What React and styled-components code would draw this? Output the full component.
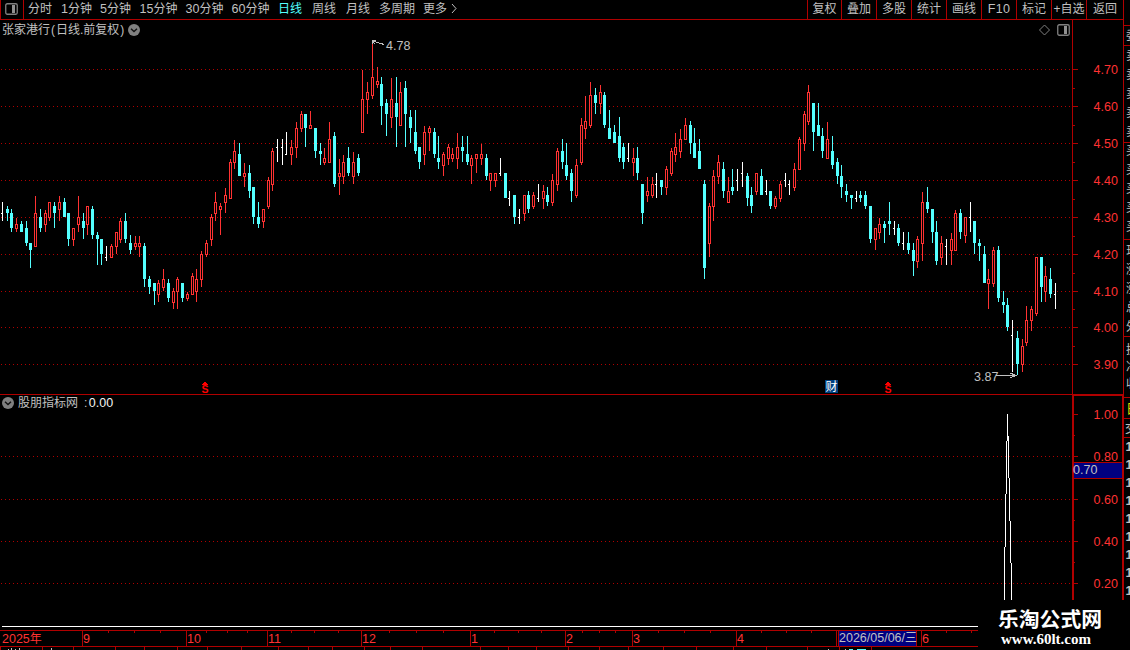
import React from 'react';
import styled, { createGlobalStyle, css } from 'styled-components';

const GlobalStyle = createGlobalStyle`
    body {
        margin: 0;
        background-color: #000;
    }
`;

const line = '#b00000';
const up = '#ff3232';
const down = '#54ffff';
const grey = '#c0c0c0';

const textStyles = css`
    font-family: "Liberation Sans", "Noto Sans CJK SC", sans-serif;
    font-size: 12px;
    line-height: 18px;
    white-space: nowrap;
`;

const Screen = styled.div`
    display: grid;
    grid-template-columns: 1123px 7px;
    width: 1130px;
    height: 650px;
    overflow: hidden;
    background-color: #000;
    color: ${grey};
    position: relative;
    ${textStyles}
`;
const Main = styled.div`
    display: grid;
    grid-template-rows: 20px 375px 235px 20px;
    min-width: 0;
`;
const Toolbar = styled.div`
    display: flex;
    box-sizing: border-box;
    border-bottom: 1px solid ${line};
    height: 20px;
    line-height: 19px;
`;
const IconCell = styled.div`
    box-sizing: border-box;
    width: 24px;
    height: 19px;
    border-left: 1px solid ${line};
    border-right: 1px solid ${line};
    padding: 3px 0 0 4px;
    margin-right: 4px;

    svg {
        display: block;
    }
`;
const Period = styled.div`
    width: ${props => props.$w}px;
    color: ${props => (props.$active ? down : grey)};

    b {
        font-weight: normal;
        font-size: 12.5px;
    }
`;
const Spacer = styled.div`
    flex: 1;
`;
const Tool = styled.div`
    box-sizing: border-box;
    width: ${props => props.$w}px;
    border-left: 1px solid ${line};
    text-align: center;
    font-size: ${props => (props.$latin ? '12.5px' : '12px')};
    letter-spacing: ${props => (props.$latin ? '0.4px' : '0')};
`;
const Pane = styled.div`
    position: relative;
    overflow: hidden;

    > svg {
        display: block;
    }
`;
const PaneTitle = styled.div`
    position: absolute;
    left: ${props => props.$x}px;
    top: ${props => props.$y}px;
    display: flex;
    align-items: center;
    height: 18px;

    i {
        font-style: normal;
        width: 6px;
        text-align: center;
    }
    b {
        font-weight: normal;
        font-size: 12.5px;
        color: #f4f4f4;
        margin-left: 1.5px;
    }
    svg {
        margin: 0 4px 1px 3px;
    }
`;
const PaneIcons = styled.div`
    position: absolute;
    left: 1038px;
    top: 3.5px;
    display: flex;
    gap: 6px;
`;
const Side = styled.div`
    overflow: hidden;

    svg {
        display: block;
    }
`;
const Watermark = styled.div`
    position: absolute;
    left: 978px;
    top: 600px;
    width: 152px;
    height: 50px;
    background-color: #000;
    color: #fff;

    strong {
        display: block;
        margin: 5px 0 0 20px;
        font-family: "Noto Sans CJK SC", sans-serif;
        font-size: 20.8px;
        line-height: 27px;
    }
    span {
        display: block;
        margin-left: 23px;
        font-family: "Liberation Serif", serif;
        font-weight: bold;
        font-size: 15px;
        line-height: 14px;
    }
`;

// [kind, x, high, body top, body bottom, low]; a 'w' bar has one body value
const candles = [
    ['w', 2, 202, 213, 213, 221], ['d', 7, 206, 209, 213, 221], ['d', 11, 209, 213, 228, 232], ['u', 16, 218, 224, 229, 232],
    ['d', 21, 221, 224, 232, 232], ['d', 26, 221, 228, 243, 246], ['d', 30, 243, 243, 250, 268], ['u', 35, 196, 213, 247, 247],
    ['d', 40, 209, 217, 228, 232], ['u', 45, 210, 213, 225, 232], ['u', 49, 202, 202, 218, 221], ['d', 54, 202, 206, 213, 228],
    ['u', 59, 196, 202, 210, 221], ['d', 64, 198, 202, 217, 217], ['d', 68, 213, 213, 239, 246], ['u', 73, 228, 228, 240, 246],
    ['u', 78, 196, 217, 225, 232], ['d', 83, 213, 221, 228, 239], ['u', 87, 206, 206, 225, 235], ['d', 92, 206, 209, 235, 239],
    ['d', 97, 232, 235, 239, 265], ['d', 101, 239, 239, 254, 265], ['w', 106, 246, 257, 257, 261], ['u', 111, 244, 246, 258, 258],
    ['u', 116, 232, 232, 247, 254], ['u', 120, 218, 221, 240, 243], ['d', 125, 213, 221, 239, 243], ['d', 130, 235, 243, 250, 254],
    ['u', 135, 236, 243, 247, 250], ['u', 139, 236, 243, 247, 257], ['d', 144, 243, 246, 279, 287], ['d', 149, 276, 279, 287, 294],
    ['d', 154, 283, 283, 291, 305], ['u', 158, 280, 283, 295, 302], ['u', 163, 269, 279, 288, 291], ['d', 168, 279, 283, 298, 302],
    ['u', 173, 288, 291, 303, 309], ['u', 177, 277, 279, 292, 309], ['d', 182, 283, 283, 298, 302], ['u', 187, 292, 294, 299, 301],
    ['u', 192, 273, 276, 295, 295], ['u', 196, 269, 279, 292, 302], ['u', 201, 251, 254, 280, 287], ['u', 206, 240, 243, 255, 257],
    ['u', 211, 214, 217, 240, 246], ['u', 215, 192, 202, 214, 221], ['u', 220, 203, 206, 210, 235], ['u', 225, 188, 195, 203, 213],
    ['u', 230, 159, 162, 199, 199], ['u', 234, 140, 151, 163, 169], ['d', 239, 143, 154, 176, 176], ['u', 244, 163, 173, 177, 187],
    ['d', 249, 165, 173, 191, 198], ['d', 253, 187, 187, 217, 224], ['d', 258, 202, 217, 224, 228], ['u', 263, 209, 209, 222, 228],
    ['u', 268, 177, 180, 207, 209], ['u', 272, 148, 151, 185, 191], ['w', 277, 139, 147, 147, 162], ['w', 282, 139, 147, 147, 165],
    ['w', 286, 132, 154, 154, 155], ['u', 291, 140, 147, 155, 165], ['u', 296, 122, 128, 148, 158], ['u', 301, 111, 114, 129, 132],
    ['d', 305, 114, 114, 128, 147], ['u', 310, 111, 125, 129, 129], ['d', 315, 128, 128, 151, 158], ['d', 320, 143, 151, 154, 165],
    ['u', 324, 148, 158, 163, 165], ['u', 329, 122, 139, 163, 163], ['d', 334, 132, 136, 184, 187], ['u', 339, 159, 173, 177, 195],
    ['u', 343, 155, 162, 177, 184], ['d', 348, 147, 158, 173, 176], ['u', 353, 152, 162, 177, 184], ['d', 358, 154, 158, 173, 176],
    ['u', 362, 70, 99, 133, 133], ['u', 367, 82, 92, 100, 114], ['u', 372, 43, 77, 96, 99], ['u', 377, 67, 81, 85, 88],
    ['d', 381, 77, 84, 106, 125], ['d', 386, 99, 103, 114, 136], ['u', 391, 78, 99, 118, 128], ['d', 396, 77, 103, 117, 147],
    ['u', 400, 82, 92, 126, 126], ['d', 405, 81, 88, 114, 147], ['d', 410, 110, 117, 128, 143], ['d', 415, 110, 132, 151, 154],
    ['d', 419, 147, 147, 162, 169], ['u', 424, 126, 132, 155, 165], ['u', 429, 126, 128, 133, 151], ['d', 434, 128, 132, 154, 158],
    ['d', 438, 136, 158, 162, 169], ['u', 443, 152, 154, 166, 176], ['u', 448, 144, 147, 159, 165], ['u', 452, 148, 154, 159, 162],
    ['u', 457, 133, 147, 159, 169], ['d', 462, 136, 147, 151, 162], ['d', 467, 136, 154, 162, 165], ['u', 471, 155, 158, 166, 184],
    ['u', 476, 154, 154, 159, 173], ['u', 481, 144, 154, 159, 165], ['d', 486, 154, 158, 176, 180], ['u', 490, 173, 173, 181, 191],
    ['u', 495, 173, 173, 181, 187], ['w', 500, 158, 173, 173, 176], ['d', 505, 173, 173, 198, 198], ['w', 509, 191, 198, 198, 206],
    ['d', 514, 195, 195, 217, 224], ['w', 519, 209, 217, 217, 224], ['u', 524, 195, 195, 214, 221], ['d', 528, 191, 195, 209, 213],
    ['u', 533, 192, 195, 207, 209], ['w', 538, 184, 198, 198, 202], ['u', 543, 185, 191, 199, 209], ['d', 547, 187, 195, 202, 206],
    ['u', 552, 174, 180, 203, 206], ['u', 557, 148, 151, 185, 191], ['d', 562, 139, 151, 162, 169], ['d', 566, 143, 165, 176, 180],
    ['d', 571, 169, 173, 191, 202], ['u', 576, 159, 165, 196, 198], ['u', 581, 118, 125, 163, 165], ['u', 585, 96, 121, 129, 139],
    ['u', 590, 82, 95, 126, 128], ['d', 595, 88, 95, 103, 114], ['u', 600, 85, 92, 104, 114], ['d', 604, 92, 95, 125, 128],
    ['d', 609, 110, 128, 139, 139], ['d', 614, 125, 132, 143, 143], ['d', 619, 117, 136, 158, 162], ['d', 623, 143, 147, 162, 169],
    ['w', 628, 143, 158, 158, 162], ['u', 633, 148, 158, 163, 176], ['d', 637, 147, 158, 173, 180], ['d', 642, 184, 184, 213, 224],
    ['u', 647, 177, 191, 196, 202], ['u', 652, 177, 184, 196, 198], ['w', 656, 173, 184, 184, 198], ['d', 661, 180, 180, 187, 195],
    ['u', 666, 166, 169, 188, 195], ['u', 671, 148, 151, 174, 176], ['u', 675, 133, 147, 155, 162], ['u', 680, 129, 139, 152, 158],
    ['u', 685, 118, 125, 140, 140], ['d', 690, 121, 125, 143, 154], ['d', 694, 128, 143, 158, 158], ['d', 699, 139, 151, 169, 169],
    ['d', 704, 180, 184, 268, 279], ['u', 709, 203, 206, 244, 257], ['u', 713, 170, 176, 207, 221], ['u', 718, 155, 162, 177, 184],
    ['d', 723, 162, 169, 191, 198], ['u', 728, 177, 191, 203, 203], ['d', 732, 169, 187, 191, 195], ['w', 737, 169, 180, 180, 191],
    ['w', 742, 162, 173, 173, 187], ['d', 747, 173, 176, 198, 206], ['d', 751, 187, 195, 206, 213], ['u', 756, 173, 173, 192, 195],
    ['d', 761, 169, 176, 195, 195], ['w', 766, 180, 191, 191, 195], ['d', 770, 191, 191, 206, 209], ['u', 775, 196, 198, 207, 209],
    ['u', 780, 181, 184, 199, 202], ['w', 785, 173, 180, 180, 187], ['w', 789, 180, 184, 184, 195], ['u', 794, 163, 169, 188, 191],
    ['u', 799, 137, 139, 170, 170], ['u', 804, 111, 114, 144, 151], ['u', 808, 85, 92, 122, 125], ['d', 813, 103, 103, 132, 151],
    ['d', 818, 103, 125, 136, 136], ['d', 822, 128, 136, 151, 158], ['u', 827, 122, 139, 159, 159], ['d', 832, 136, 151, 165, 169],
    ['d', 837, 158, 162, 176, 184], ['d', 841, 165, 176, 187, 198], ['d', 846, 184, 191, 195, 202], ['d', 851, 195, 195, 198, 209],
    ['w', 856, 191, 198, 198, 202], ['d', 860, 191, 195, 198, 202], ['d', 865, 191, 195, 206, 209], ['d', 870, 206, 206, 239, 243],
    ['u', 875, 228, 228, 240, 250], ['u', 879, 218, 224, 233, 239], ['d', 884, 221, 224, 228, 243], ['d', 889, 202, 221, 224, 235],
    ['w', 894, 221, 228, 228, 235], ['d', 898, 224, 228, 243, 246], ['w', 903, 232, 243, 243, 250], ['d', 908, 232, 243, 250, 254],
    ['d', 913, 243, 250, 261, 276], ['u', 917, 236, 239, 262, 268], ['u', 922, 192, 202, 244, 261], ['d', 927, 187, 202, 209, 213],
    ['d', 932, 209, 209, 232, 243], ['d', 936, 221, 232, 261, 265], ['u', 941, 236, 243, 258, 265], ['w', 946, 239, 246, 246, 265],
    ['u', 951, 233, 239, 251, 265], ['u', 955, 210, 213, 251, 251], ['d', 960, 209, 213, 232, 239], ['u', 965, 217, 217, 236, 243],
    ['w', 970, 202, 217, 217, 232], ['d', 974, 221, 221, 243, 254], ['d', 979, 239, 243, 246, 261], ['d', 984, 246, 254, 283, 283],
    ['u', 988, 269, 279, 284, 309], ['u', 993, 247, 250, 284, 287], ['d', 998, 246, 250, 298, 302], ['d', 1003, 291, 302, 305, 313],
    ['d', 1007, 298, 305, 327, 331], ['w', 1012, 320, 335, 335, 372], ['d', 1017, 331, 338, 364, 375], ['u', 1022, 339, 346, 365, 372],
    ['u', 1026, 306, 320, 343, 346], ['u', 1031, 306, 309, 321, 331], ['u', 1036, 257, 257, 314, 316], ['d', 1041, 257, 257, 287, 302],
    ['u', 1045, 266, 276, 292, 302], ['d', 1050, 268, 279, 294, 298], ['w', 1055, 283, 294, 294, 309],
];

const prices = [['4.70', 69], ['4.60', 106], ['4.50', 143], ['4.40', 180], ['4.30', 217], ['4.20', 254], ['4.10', 291], ['4.00', 327], ['3.90', 364]];
const priceMinor = [88, 125, 162, 199, 236, 273, 309, 346];
const levels = [['1.00', 414], ['0.80', 456], ['0.60', 499], ['0.40', 541], ['0.20', 583]];
const levelMinor = [435, 520, 562];
const months = [['9', 82], ['10', 186], ['11', 267], ['12', 361], ['1', 470], ['2', 565], ['3', 632], ['4', 736], ['6', 921]];
const weekTicks = [108, 134, 160, 206, 227, 247, 291, 314, 338, 389, 416, 443, 494, 518, 541, 582, 599, 615, 658, 684, 710, 761, 786, 811, 946, 971];
const footTicks = [0, 42, 73, 115, 144, 177, 207, 241, 278, 308, 332, 364, 390, 422, 480, 508, 536, 568, 599, 628, 663, 696, 733, 766, 807, 839, 871];

const periods = [
    ['', '分时', 33], ['1', '分钟', 39], ['5', '分钟', 39.5], ['15', '分钟', 46], ['30', '分钟', 46], ['60', '分钟', 46.5],
    ['', '日线', 34], ['', '周线', 34], ['', '月线', 33], ['', '多周期', 44], ['', '更多', 27],
];
const tools = [['复权', 34], ['叠加', 35], ['多股', 35], ['统计', 35], ['画线', 35], ['F10', 35], ['标记', 35], ['+自选', 35], ['返回', 37]];

function Candle({ data }) {
    const [kind, x, high, top, bottom, low] = data;
    if (kind === 'w') {
        return <path fill="#fff" d={`M${x} ${high}h1V${low}h-1zM${x - 1} ${top}h1v1h-1z`} />;
    }
    if (kind === 'd') {
        return <path fill={down} d={`M${x} ${high}h1V${low}h-1zM${x - 1} ${top}h3V${bottom}h-3z`} />;
    }
    return (
        <g>
            <path fill={up} d={`M${x} ${high}h1V${top}h-1zM${x} ${bottom}h1V${low}h-1z`} />
            <rect x={x - 0.5} y={top + 0.5} width="2" height={bottom - top - 1} fill="none" stroke={up} />
        </g>
    );
}

function GridLine({ y }) {
    return <path d={`M1 ${y + 0.5}H1072`} stroke={line} strokeDasharray="1 3" />;
}

function AxisText({ x, y, fill, children }) {
    return (
        <text x={x} y={y} fill={fill || up} fontSize="12.5">{children}</text>
    );
}

function PanelIcon() {
    return (
        <svg width="13" height="12" viewBox="0 0 13 12">
            <rect x="0.75" y="0.75" width="11.5" height="10.5" rx="1.5" fill="none" stroke="#808080" strokeWidth="1.3" />
            <rect x="7" y="2" width="3" height="8" fill="#909090" />
        </svg>
    );
}

function Chevron() {
    return (
        <svg width="12" height="12" viewBox="0 0 12 12">
            <circle cx="6" cy="6" r="6" fill="#808080" />
            <path d="M3 4.8L6 7.6L9 4.8" fill="none" stroke="#111" strokeWidth="1.4" />
        </svg>
    );
}

function Dividend({ x }) {
    return (
        <g fill="#ff0000">
            <path d={`M${x + 2} 382h2v1h1v1h1v1h-6v-1h1v-1h1z`} />
            <text x={x - 0.5} y="393" fontSize="10.5" fontWeight="bold">S</text>
        </g>
    );
}

function PriceChart() {
    return (
        <svg width="1123" height="375" viewBox="0 20 1123 375" shapeRendering="crispEdges">
            {prices.map(([label, y]) => (
                <g key={label}>
                    <GridLine y={y} />
                    <rect x="1073" y={y} width="5" height="1" fill={line} />
                    <AxisText x="1093.5" y={y + 5}>{label}</AxisText>
                </g>
            ))}
            {priceMinor.map(y => <rect key={y} x="1073" y={y} width="2" height="1" fill={line} />)}
            <rect x="1072" y="20" width="1" height="375" fill={line} />
            {candles.map(c => <Candle key={c[1]} data={c} />)}
            <path d="M372.5 44V40.5H376M373 41L384 44.5M372.5 41L375 44" fill="none" stroke={grey} />
            <AxisText x="386" y="50" fill={grey}>4.78</AxisText>
            <AxisText x="974" y="381" fill={grey}>3.87</AxisText>
            <path d="M996 375.5H1016M1010 373L1016 375.5L1010 378" fill="none" stroke={grey} />
            <Dividend x={202} />
            <Dividend x={885} />
            <rect x="825" y="380" width="13" height="13" fill="#004080" />
            <text x="825.5" y="391" fontSize="12" fill="#fff">财</text>
            <rect x="0" y="394" width="1123" height="1" fill={line} />
        </svg>
    );
}

function IndicatorChart() {
    return (
        <svg width="1123" height="235" viewBox="0 395 1123 235" shapeRendering="crispEdges">
            {levels.map(([label, y], i) => (
                <g key={label}>
                    {i > 0 && <GridLine y={y} />}
                    <rect x="1074" y={y} width="4" height="1" fill={line} />
                    <AxisText x="1093.5" y={y + 5}>{label}</AxisText>
                </g>
            ))}
            {levelMinor.map(y => <rect key={y} x="1074" y={y} width="1" height="1" fill={line} />)}
            <path fill="#fff" d="M1007 414h1v27h-1zM1006 441h1v53h-1zM1005 494h1v53h-1zM1004 547h1v60h-1zM1008 436h1v42h-1zM1009 478h1v43h-1zM1010 521h1v42h-1zM1011 563h1v40h-1z" />
            <rect x="1074" y="462" width="48" height="17" fill={line} />
            <rect x="1074" y="463" width="48" height="15" fill="#000080" />
            <path fill={line} d="M1072 395h51v1h-49v234h-2zM1122 395h1v235h-1z" />
            <AxisText x="1073" y="474" fill={grey}>0.70</AxisText>
            <rect x="2" y="626" width="1070" height="1" fill="#fff" />
        </svg>
    );
}

function Timeline() {
    return (
        <svg width="1123" height="20" viewBox="0 630 1123 20" shapeRendering="crispEdges">
            <path fill={line} d="M0 630h1123v1h-1123zM0 646h1123v1h-1123zM836 631h1v15h-1z" />
            <AxisText x="2" y="643">2025<tspan fontSize="12">年</tspan></AxisText>
            {months.map(([label, x]) => (
                <g key={label}>
                    <rect x={x} y="631" width="1" height="15" fill={line} />
                    <AxisText x={x + 1} y="643">{label}</AxisText>
                </g>
            ))}
            {weekTicks.map(x => <rect key={x} x={x} y="631" width="1" height="2" fill={line} />)}
            {footTicks.map(x => <rect key={x} x={x} y="647" width="1" height="3" fill={line} />)}
            <rect x="838" y="631" width="79" height="15" fill={line} />
            <rect x="839" y="631" width="77" height="15" fill="#000080" />
            <AxisText x="839" y="642" fill={grey}>2026/05/06/<tspan fontSize="12">三</tspan></AxisText>
            <path fill={grey} d="M8 649h1v1h-1zM11 648h1v2h-1zM15 649h1v1h-1zM19 648h1v2h-1zM51 648h1v2h-1zM828 649h1v1h-1zM845 649h1v1h-1z" />
            <path fill={down} d="M849 649h4v1h-4zM857 649h9v1h-9z" />
        </svg>
    );
}

// left edge of the quote panel, only the first pixels of each row are in view
function QuoteEdge() {
    const rows = ['委', '卖', '卖', '卖', '卖', '卖', '买', '买', '买', '买', '买'];
    const info = ['现', '涨', '涨', '总', '外'];
    return (
        <svg width="7" height="650" viewBox="1123 0 7 650" shapeRendering="crispEdges" fontSize="12" fill={grey}>
            <path fill={line} d="M1123 0h1v650h-1zM1123 25h7v1h-7zM1123 45h7v1h-7zM1123 142h7v1h-7zM1123 239h7v1h-7zM1123 336h7v1h-7zM1123 397h7v1h-7zM1123 418h7v1h-7zM1123 437h7v1h-7z" />
            {rows.map((r, i) => <text key={i} x="1126" y={i ? 41 + i * 19 : 40}>{r}</text>)}
            {info.map((r, i) => <text key={i} x="1126" y={255 + i * 19}>{r}</text>)}
            <text x="1126" y="354">换</text>
            <text x="1126" y="371">净</text>
            <text x="1126" y="388">收</text>
            <text x="1126" y="413" fontSize="13" fill="#e0e000">日</text>
            <text x="1125" y="433">交</text>
            {[0, 1, 2, 3, 4, 5, 6, 7, 8].map(i => (
                <text key={i} x="1125.5" y={451 + i * 18} fontSize="12.5" fontWeight="bold">1</text>
            ))}
        </svg>
    );
}

function App() {
    return (
        <>
            <GlobalStyle />
            <Screen>
                <Main>
                    <Toolbar>
                        <IconCell><PanelIcon /></IconCell>
                        {periods.map(([num, name, w]) => (
                            <Period key={num + name} $w={w} $active={name === '日线'}>
                                {num && <b>{num}</b>}{name}
                            </Period>
                        ))}
                        <svg width="8" height="18" viewBox="0 0 8 18">
                            <path d="M2 4L6 8.5L2 13" fill="none" stroke={grey} />
                        </svg>
                        <Spacer />
                        {tools.map(([name, w]) => (
                            <Tool key={name} $w={w} $latin={name === 'F10'}>{name}</Tool>
                        ))}
                    </Toolbar>
                    <Pane>
                        <PriceChart />
                        <PaneTitle $x={2} $y={1}>
                            张家港行<i>(</i>日线.前复权<i>)</i>
                            <Chevron />
                        </PaneTitle>
                        <PaneIcons>
                            <svg width="13" height="12" viewBox="0 0 13 12">
                                <path d="M6.5 1L11.5 6L6.5 11L1.5 6Z" fill="none" stroke="#808080" />
                            </svg>
                            <PanelIcon />
                        </PaneIcons>
                    </Pane>
                    <Pane>
                        <IndicatorChart />
                        <PaneTitle $x={-1} $y={-1}>
                            <Chevron />
                            股朋指标网<i>&nbsp;</i>:<b>0.00</b>
                        </PaneTitle>
                    </Pane>
                    <Timeline />
                </Main>
                <Side><QuoteEdge /></Side>
                <Watermark>
                    <strong>乐淘公式网</strong>
                    <span>www.60lt.com</span>
                </Watermark>
            </Screen>
        </>
    );
}

export default App;
